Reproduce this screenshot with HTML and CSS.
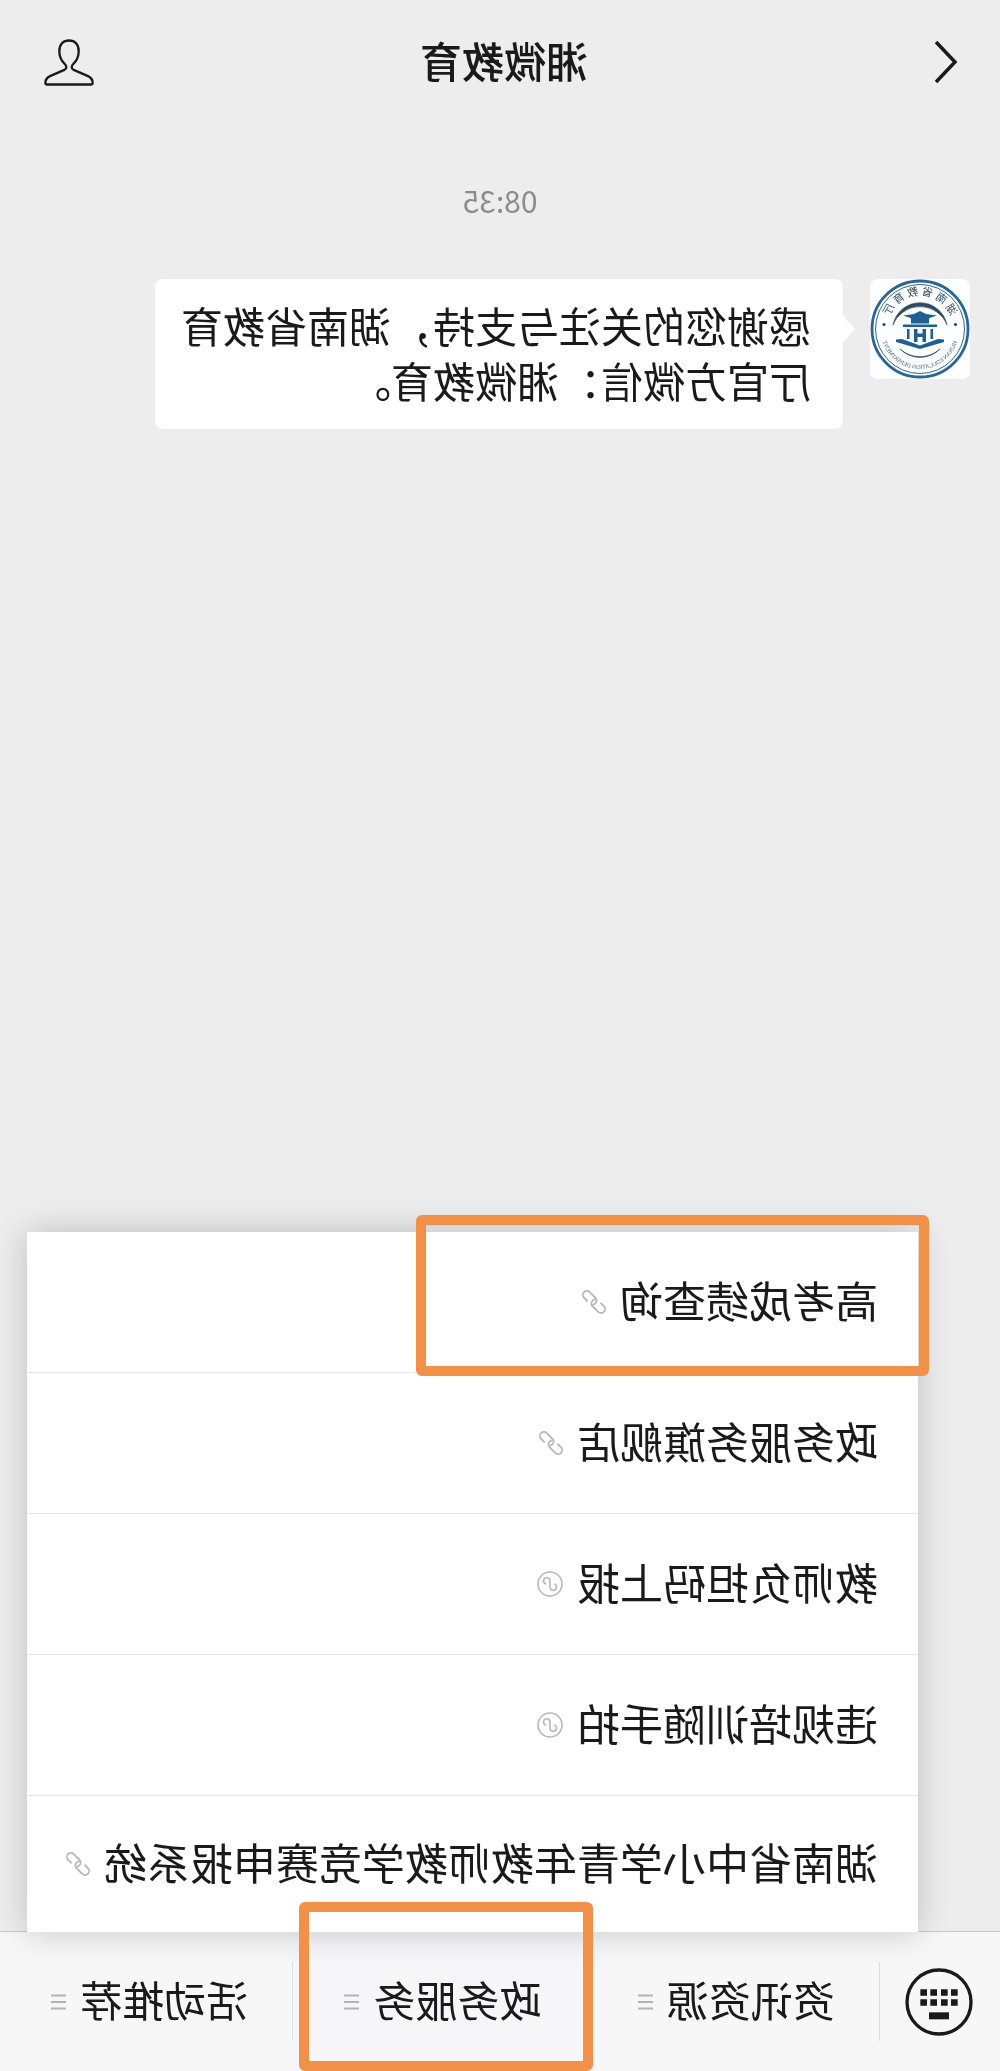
FILE: index.html
```
<!DOCTYPE html>
<html lang="zh-CN">
<head>
  <meta charset="utf-8"/>
  <meta name="viewport" content="width=device-width"/>
  <title>湘微教育</title>
  <link rel="stylesheet" href="styles.css">
</head>
<body>
  <svg width="0" height="0" class="sprite" aria-hidden="true">
    <symbol id="icon-link" viewBox="0 0 24 24">
      <g transform="rotate(-45 12 12)" fill="none" stroke="currentColor" stroke-width="1.8">
        <path d="M17 16h5a4 4 0 0 0 0-8h-8a4 4 0 0 0-4 4q0 2 1.500 3.200"/>
        <path d="M7 8h-5a4 4 0 0 0 0 8h8a4 4 0 0 0 4-4q0-2-1.500-3.200"/>
      </g>
    </symbol>
    <symbol id="icon-mini" viewBox="0 0 26 26">
      <g fill="none" stroke="currentColor" stroke-width="1.6">
        <circle cx="13" cy="13" r="12"/>
        <path d="M17 13c1.500-.3 2.500-1.500 2.500-3a3.250 3.250 0 0 0-6.500 0v6a3.250 3.250 0 0 1-6.500 0c0-1.500 1-2.700 2.500-3"/>
      </g>
    </symbol>
    <symbol id="icon-lines" viewBox="0 0 15 16">
      <path d="M0 1.500h15M0 8h15M0 14.500h15" stroke="currentColor" stroke-width="1.800"/>
    </symbol>
  </svg>

  <div class="screen flipped">
    <header class="topbar">
      <button class="icon-btn back" aria-label="返回">
        <svg width="24" height="44" viewBox="0 0 24 44"><path d="M22 2L3 22l19 20" fill="none" stroke="#1a1a1a" stroke-width="3.500"/></svg>
      </button>
      <h1>湘微教育</h1>
      <button class="icon-btn" aria-label="账号资料">
        <svg width="50" height="47" viewBox="0 0 150 140">
          <path d="M75 4C57 4 46 16 46 36C46 52 52 64 61 73C69 81 69 88 61 92L18 111C8 116 4 122 4 131Q4 136 9 136H141Q146 136 146 131C146 122 142 116 132 111L89 92C81 88 81 81 89 73C98 64 104 52 104 36C104 16 93 4 75 4Z" fill="none" stroke="#1a1a1a" stroke-width="7"/>
        </svg>
      </button>
    </header>

    <main class="chat">
      <time class="stamp">08:35</time>
      <div class="message">
        <svg class="avatar" viewBox="0 0 100 100" role="img" aria-label="湖南省教育厅">
          <defs>
            <path id="arc-top" d="M19 39A32.500 32.500 0 0 1 81 39"/>
            <path id="arc-bottom" d="M11 51A39 39 0 0 0 89 51"/>
          </defs>
          <circle cx="50" cy="50" r="48" fill="none" stroke="#2b6593" stroke-width="2.800"/>
          <circle cx="50" cy="50" r="44.500" fill="none" stroke="#2b6593" stroke-width="1"/>
          <text class="seal-cn"><textPath href="#arc-top" startOffset="50%" text-anchor="middle">湖 南 省 教 育 厅</textPath></text>
          <text class="seal-en"><textPath href="#arc-bottom" startOffset="50%" text-anchor="middle">HUNAN EDUCATION DEPARTMENT</textPath></text>
          <g fill="#2f4a60">
            <circle cx="14.500" cy="45.500" r="1.600"/>
            <circle cx="86" cy="45.500" r="1.600"/>
            <path d="M23 46A27.500 27.500 0 0 1 77 46A29 29 0 0 0 23 46Z" stroke="#2f4a60" stroke-width=".6"/>
            <path d="M30 70A28 28 0 0 0 70 70A30 30 0 0 1 30 70Z" stroke="#2f4a60" stroke-width=".6"/>
          </g>
          <g fill="#1f5f92">
            <path d="M33 36.500l11-1.500 6-3 6 3 11 1.500-6 2-2 1v5H41v-5l-2-1z"/>
            <path d="M33 45.500h34v2.500H33z"/>
            <path d="M37 50h2.500v10H37zM60.500 50H63v10h-2.500z"/>
            <path d="M44 50h3.500v4.500h5V50H56v13h-3.500v-5h-5v5H44z"/>
            <path d="M26 60.500l6-.5 18 6.500L68 60l6 .5v2.500L50 70 26 63z"/>
          </g>
        </svg>
        <p class="bubble">感谢您的关注与支持，湖南省教育厅官方微信：湘微教育。</p>
      </div>
    </main>

    <footer class="menubar">
      <ul class="popup">
        <li>
          <a href="#score"><span class="label">高考成绩查询</span><svg class="kind" width="24" height="24"><use href="#icon-link"/></svg></a>
          <span class="marker marker-item"></span>
        </li>
        <li><a href="#flagship"><span class="label">政务服务旗舰店</span><svg class="kind" width="24" height="24"><use href="#icon-link"/></svg></a></li>
        <li><a href="#burden"><span class="label">教师负担码上报</span><svg class="kind" width="26" height="26"><use href="#icon-mini"/></svg></a></li>
        <li><a href="#training"><span class="label">违规培训随手拍</span><svg class="kind" width="26" height="26"><use href="#icon-mini"/></svg></a></li>
        <li><a href="#contest"><span class="label">湖南省中小学青年教师教学竞赛申报系统</span><svg class="kind" width="24" height="24"><use href="#icon-link"/></svg></a></li>
      </ul>

      <button class="keyboard" aria-label="键盘">
        <svg width="68" height="68" viewBox="0 0 204 204" fill="#1a1a1a">
          <circle cx="102" cy="102" r="96" fill="none" stroke="#1a1a1a" stroke-width="10"/>
          <path d="M46 64h20v19H46zM76 64h20v19H76zM108 64h20v19h-20zM138 64h20v19h-20z"/>
          <path d="M46 94h20v19H46zM76 94h20v19H76zM108 94h20v19h-20zM138 94h20v19h-20z"/>
          <path d="M72 133h60v21H72z"/>
        </svg>
      </button>
      <button class="tab"><span class="label">资讯资源</span><svg class="lines" width="15" height="16"><use href="#icon-lines"/></svg></button>
      <button class="tab active"><span class="label">政务服务</span><svg class="lines" width="15" height="16"><use href="#icon-lines"/></svg><span class="marker marker-tab"></span></button>
      <button class="tab"><span class="label">活动推荐</span><svg class="lines" width="15" height="16"><use href="#icon-lines"/></svg></button>
    </footer>
  </div>
</body>
</html>
```
FILE: styles.css
```
* { box-sizing: border-box; }
body {
  margin: 0; background: #ededed; color: #1a1a1a;
  font-family: "Noto Sans CJK SC", sans-serif; font-size: 42px; line-height: 55px;
}
button { margin: 0; padding: 0; border: 0; background: none; color: inherit; font: inherit; cursor: pointer; }
svg { display: block; flex: none; }
.sprite { position: absolute; }

.screen { display: flex; flex-direction: column; min-height: 100vh; }
.flipped { transform: scaleX(-1); }

.topbar { display: flex; align-items: center; justify-content: space-between; height: 124px; padding: 0 44px 0 36px; }
.topbar h1 { margin: 0; padding-bottom: 6px; font-size: 42px; font-weight: 500; }
.icon-btn { width: 50px; }
.back { padding-left: 6px; }

.chat { flex: 1; padding: 56px 30px 0; }
.stamp { display: block; text-align: center; color: #8c8c8c; font-size: 30px; line-height: 40px; }
.message { display: flex; align-items: flex-start; gap: 27px; margin: 59px 125px 0 0; }
.avatar { width: 100px; height: 100px; border-radius: 8px; background: #fcfeff; }
.seal-cn { font-size: 11px; fill: #3c4f5e; }
.seal-en { font-size: 6px; fill: #4c5f6e; font-family: "Liberation Serif", serif; }
.bubble { position: relative; flex: 1; margin: 0; padding: 18px 24px 22px 32px; border-radius: 8px; background: #fff; }
.bubble::before {
  content: ""; position: absolute; left: -12px; top: 37px;
  border: 13px solid transparent; border-left: 0; border-right: 12px solid #fff;
}

.menubar { position: relative; display: flex; height: 140px; border-top: 1px solid #c4c4c4; background: #f7f7f7; }
.keyboard { display: flex; align-items: center; justify-content: center; width: 120px; padding-left: 2px; }
.tab { position: relative; flex: 1; display: flex; align-items: center; justify-content: center; gap: 14px; padding-right: 6px; }
.tab::before { content: ""; position: absolute; left: 0; top: 30px; bottom: 30px; width: 1px; background: #dedede; }
.tab.active { background: #f6f6f9; }
.lines { color: #b4b4b4; }
.label { padding-bottom: 6px; }

.popup {
  position: absolute; z-index: 2; left: 82px; right: 27px; bottom: 100%;
  margin: 0; padding: 0; list-style: none; background: #fff; box-shadow: 0 0 32px rgba(0, 0, 0, 0.2);
  font-size: 43px;
}
.popup li { position: relative; border-bottom: 1px solid #e6e6e6; }
.popup li:last-child { border-bottom: 0; }
.popup a { display: flex; align-items: center; gap: 14px; height: 140px; padding: 0 40px; color: inherit; text-decoration: none; white-space: nowrap; }
.popup li:last-child a { height: 136px; }
.kind { color: #b8b8b8; }

.marker { position: absolute; z-index: 3; border: 10px solid #f19149; border-radius: 6px; pointer-events: none; }
.marker-item { left: -11px; top: -17px; width: 513px; height: 161px; }
.marker-tab { left: -6px; right: 6px; top: -30px; bottom: 0; }
```
